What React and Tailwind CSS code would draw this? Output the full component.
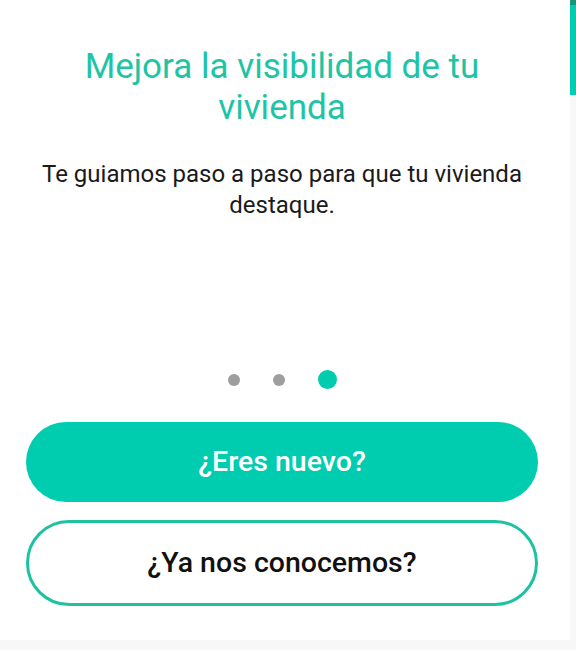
export default function App() {
  const dots = [false, false, true];

  return (
    <div className="flex h-[650px] w-[576px] flex-col bg-white font-['Roboto',sans-serif]">
      <div className="flex flex-1">
        <main className="flex flex-1 flex-col pl-[26px] pr-[32px]">
          <h1 className="mt-[46px] px-4 text-center text-[35px] leading-[41px] font-normal text-[#1fc4a5]">
            Mejora la visibilidad de tu vivienda
          </h1>
          <p className="mt-[31px] text-center text-[24px] leading-[31px] text-[#1a1a1a]">
            Te guiamos paso a paso para que tu vivienda destaque.
          </p>

          <div className="mt-[149px] flex items-center justify-center gap-[33px]">
            {dots.map((active, i) =>
              active ? (
                <span key={i} className="h-[19px] w-[19px] rounded-full bg-[#00cdb0]" />
              ) : (
                <span key={i} className="h-[12px] w-[12px] rounded-full bg-[#9e9e9e]" />
              )
            )}
          </div>

          <button
            type="button"
            className="mt-[33px] h-[80px] w-full rounded-full bg-[#00ccaf] text-[28.5px] font-medium text-white"
          >
            ¿Eres nuevo?
          </button>
          <button
            type="button"
            className="mt-[18px] h-[86px] w-full rounded-full border-[3px] border-[#1ec1a1] bg-white text-[28.5px] font-medium text-[#111]"
          >
            ¿Ya nos conocemos?
          </button>
        </main>

        <div className="flex w-[6px] flex-col">
          <div className="h-[5px] bg-[#16957d]" />
          <div className="h-[90px] bg-[#00ccaf]" />
          <div className="flex-1 bg-[#f8f8f8]" />
        </div>
      </div>
      <div className="h-[10px] bg-[#f7f7f7]" />
    </div>
  );
}
